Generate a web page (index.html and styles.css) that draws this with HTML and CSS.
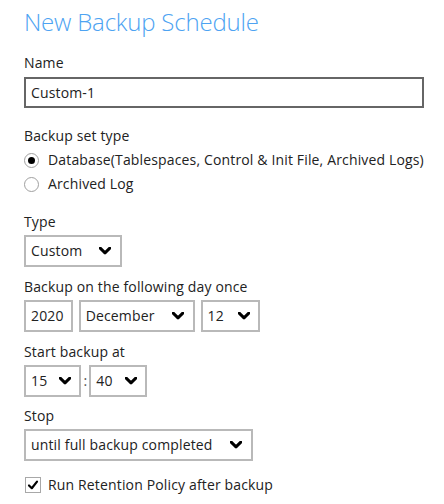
FILE: index.html
```html
<!DOCTYPE html>
<html>
<head>
<meta charset="utf-8">
<link rel="stylesheet" href="styles.css">
</head>
<body>
<div class="page">
  <h1 class="title">New Backup Schedule</h1>

  <div class="label">Name</div>
  <div class="textbox">Custom-1</div>

  <div class="label label-gap">Backup set type</div>
  <div class="radios">
    <div class="radio-row"><span class="radio checked"></span><span>Database(Tablespaces, Control &amp; Init File, Archived Logs)</span></div>
    <div class="radio-row"><span class="radio"></span><span>Archived Log</span></div>
  </div>

  <div class="label label-gap2">Type</div>
  <div class="row">
    <div class="select wide"><span>Custom</span><svg class="chev" viewBox="0 0 12 8"><path d="M1.2 1.2 L6 5.8 L10.8 1.2" /></svg></div>
  </div>

  <div class="label label-gap3">Backup on the following day once</div>
  <div class="row">
    <div class="select plain"><span>2020</span></div>
    <div class="select wide"><span>December</span><svg class="chev" viewBox="0 0 12 8"><path d="M1.2 1.2 L6 5.8 L10.8 1.2" /></svg></div>
    <div class="select"><span>12</span><svg class="chev" viewBox="0 0 12 8"><path d="M1.2 1.2 L6 5.8 L10.8 1.2" /></svg></div>
  </div>

  <div class="label label-gap3">Start backup at</div>
  <div class="row time">
    <div class="select compact"><span>15</span><svg class="chev" viewBox="0 0 12 8"><path d="M1.2 1.2 L6 5.8 L10.8 1.2" /></svg></div>
    <span class="colon">:</span>
    <div class="select compact"><span>40</span><svg class="chev" viewBox="0 0 12 8"><path d="M1.2 1.2 L6 5.8 L10.8 1.2" /></svg></div>
  </div>

  <div class="label label-gap4">Stop</div>
  <div class="row">
    <div class="select wide"><span>until full backup completed</span><svg class="chev" viewBox="0 0 12 8"><path d="M1.2 1.2 L6 5.8 L10.8 1.2" /></svg></div>
  </div>

  <div class="check-row">
    <span class="checkbox"><svg viewBox="0 0 12 12"><path d="M2 6.5 L4.8 9.2 L10 2.6" /></svg></span>
    <span>Run Retention Policy after backup</span>
  </div>
</div>
</body>
</html>
```

FILE: styles.css
```css
html, body {
  margin: 0;
  padding: 0;
  background: #ffffff;
}

body {
  font-family: "Open Sans", "Noto Sans", sans-serif;
  font-size: 14px;
  letter-spacing: 0.15px;
  color: #222222;
}

.page {
  padding: 5px 20px 0 24px;
  display: flex;
  flex-direction: column;
  align-items: flex-start;
}

.title {
  margin: 0;
  font-size: 24px;
  line-height: 34px;
  font-weight: 300;
  letter-spacing: -0.2px;
  color: #4da3f2;
}

.label {
  line-height: 20px;
  margin-top: 14px;
  margin-bottom: 4px;
}

.label-gap { margin-top: 18px; margin-bottom: 2px; }
.label-gap2 { margin-top: 16px; margin-bottom: 3px; }
.label-gap3 { margin-top: 10px; margin-bottom: 3px; }
.label-gap4 { margin-top: 9px; margin-bottom: 3px; }

.textbox {
  box-sizing: border-box;
  width: 400px;
  height: 31px;
  border: 2px solid #666666;
  padding: 0 5px;
  display: flex;
  align-items: center;
  line-height: 20px;
}

.radios {
  display: flex;
  flex-direction: column;
}

.radio-row {
  display: flex;
  align-items: center;
  gap: 9px;
  height: 24px;
  line-height: 20px;
}

.radio {
  box-sizing: border-box;
  width: 15px;
  height: 15px;
  border: 1.5px solid #a0a0a0;
  border-radius: 50%;
  display: flex;
  align-items: center;
  justify-content: center;
}

.radio.checked::after {
  content: "";
  width: 7px;
  height: 7px;
  border-radius: 50%;
  background: #000000;
}

.row {
  display: flex;
  align-items: center;
  gap: 6px;
}

.row.time { gap: 0; }

.colon {
  width: 8px;
  text-align: center;
  color: #555555;
  line-height: 20px;
}

.select {
  box-sizing: border-box;
  height: 32px;
  border: 2px solid #b9b9b9;
  padding: 0 8px 0 5px;
  display: flex;
  align-items: center;
  gap: 14px;
  line-height: 20px;
}

.select.wide {
  gap: 17px;
  padding-right: 9px;
}

.select.compact {
  gap: 12px;
}

.select.plain {
  padding: 0 7px 0 5px;
}

.chev {
  width: 12px;
  height: 8px;
  flex: none;
}

.chev path {
  fill: none;
  stroke: #000000;
  stroke-width: 3;
  stroke-linecap: round;
  stroke-linejoin: round;
}

.check-row {
  margin-top: 14px;
  display: flex;
  align-items: center;
  gap: 7px;
  line-height: 20px;
}

.checkbox {
  box-sizing: border-box;
  width: 16px;
  height: 16px;
  border: 1.5px solid #a8a8a8;
  margin-left: 1px;
  display: flex;
  align-items: center;
  justify-content: center;
}

.checkbox svg {
  width: 12px;
  height: 12px;
}

.checkbox path {
  fill: none;
  stroke: #000000;
  stroke-width: 2.2;
  stroke-linecap: round;
  stroke-linejoin: round;
}
```
